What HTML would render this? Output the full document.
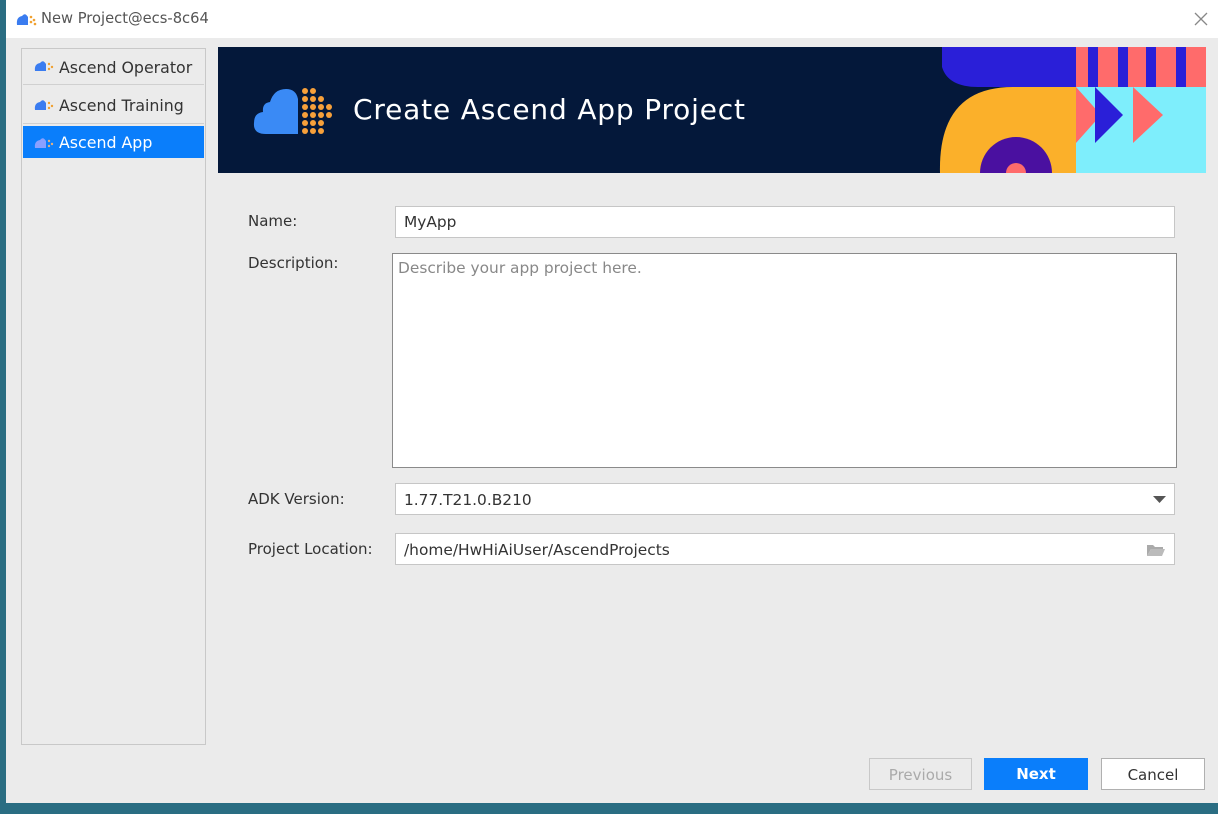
<!DOCTYPE html>
<html><head><meta charset="utf-8"><style>
*{margin:0;padding:0;box-sizing:border-box}
body{width:1218px;height:814px;background:#2a6d82;font-family:"DejaVu Sans","Liberation Sans",sans-serif;position:relative;overflow:hidden}
.win{position:absolute;left:6px;top:0;width:1212px;height:803px;background:#ebebeb}
.title{position:absolute;left:0;top:0;width:1212px;height:38px;background:#fff;font-size:14.7px;color:#555}
.abs{position:absolute}
.side{position:absolute;left:15px;top:48px;width:185px;height:697px;border:1px solid #c8c8c8;background:#ebebeb}
.item{position:absolute;left:1px;width:181px;font-size:15.8px;color:#333;padding-left:36px;border-bottom:1px solid #d0d0d0;background:#ebebeb}
.lbl{position:absolute;left:242px;font-size:15px;color:#333}
.fld{position:absolute;background:#fff;border:1px solid #c6c6c6;font-size:15.4px;color:#333;padding-left:8px}
.btn{position:absolute;top:758px;height:32px;font-size:15px;text-align:center;line-height:32px}
</style></head><body>
<div class="win">
<div class="title">
<svg class="abs" style="left:10px;top:11px" width="22" height="16"><path d="M1 14 Q0 6 6 5 Q9 1 12 6 L12 14Z" fill="#3a7cf0"/><circle cx="15" cy="6" r="1.3" fill="#f0a030"/><circle cx="18" cy="9" r="1.3" fill="#f0a030"/><circle cx="15" cy="11" r="1.3" fill="#f0a030"/><circle cx="19" cy="13" r="1.3" fill="#f0a030"/></svg>
<div class="abs" style="left:35px;top:10px">New Project@ecs-8c64</div>
<svg class="abs" style="left:1188px;top:12px" width="14" height="14"><path d="M1 1L13 13M13 1L1 13" stroke="#888" stroke-width="1.3"/></svg>
</div>
<div class="side">
<div class="item" style="top:1px;height:35px;line-height:35px">Ascend Operator</div>
<div class="item" style="top:38px;height:37px;line-height:37px">Ascend Training</div>
<div class="item" style="top:77px;height:32px;line-height:33px;background:#0a7efb;color:#fff;border:none">Ascend App</div>
<svg class="abs" style="left:12px;top:10px" width="22" height="14"><path d="M1 12 Q0 5 6 4 Q9 0 12 5 L12 12Z" fill="#3a7cf0"/><circle cx="15" cy="5" r="1.2" fill="#f0a030"/><circle cx="18" cy="8" r="1.2" fill="#f0a030"/><circle cx="15" cy="10" r="1.2" fill="#f0a030"/></svg>
<svg class="abs" style="left:12px;top:49px" width="22" height="14"><path d="M1 12 Q0 5 6 4 Q9 0 12 5 L12 12Z" fill="#3a7cf0"/><circle cx="15" cy="5" r="1.2" fill="#f0a030"/><circle cx="18" cy="8" r="1.2" fill="#f0a030"/><circle cx="15" cy="10" r="1.2" fill="#f0a030"/></svg>
<svg class="abs" style="left:12px;top:87px" width="22" height="14"><path d="M1 12 Q0 5 6 4 Q9 0 12 5 L12 12Z" fill="#8aa0ff"/><circle cx="15" cy="5" r="1.2" fill="#e0b080"/><circle cx="18" cy="8" r="1.2" fill="#e0b080"/><circle cx="15" cy="10" r="1.2" fill="#e0b080"/></svg>
</div>
<svg class="abs" style="left:212px;top:47px" width="988" height="126" viewBox="0 0 988 126">
<rect width="988" height="126" fill="#04183a"/>
<path d="M724 0 H858 V40 H760 Q730 40 724 20Z" fill="#2a1fd8"/>
<rect x="858" y="0" width="130" height="40" fill="#ff6b6b"/>
<rect x="870" y="0" width="10" height="40" fill="#2a1fd8"/><rect x="900" y="0" width="10" height="40" fill="#2a1fd8"/><rect x="928" y="0" width="10" height="40" fill="#2a1fd8"/><rect x="958" y="0" width="10" height="40" fill="#2a1fd8"/>
<rect x="858" y="40" width="130" height="86" fill="#7eeefc"/>
<path d="M858 40 L883 68 L858 96Z" fill="#ff6b6b"/><path d="M877 40 L905 68 L877 96Z" fill="#2a1fd8"/><path d="M915 40 L945 68 L915 96Z" fill="#ff6b6b"/>
<path d="M722 126 Q720 40 795 40 H858 V126Z" fill="#fbb02a"/>
<path d="M762 126 A36 36 0 0 1 834 126Z" fill="#4a10a0"/><path d="M788 126 A10 10 0 0 1 808 126Z" fill="#ff6b6b"/>
<path d="M48 87 Q35 87 36 76 Q36 66 45 65 Q44 56 52 55 Q56 42 68 42 Q78 42 80 52 V87Z" fill="#3a8af5"/>
<g fill="#f7a03a"><circle cx="87" cy="44" r="3"/><circle cx="95" cy="44" r="3"/><circle cx="87" cy="52" r="3"/><circle cx="95" cy="52" r="3"/><circle cx="103" cy="52" r="3"/><circle cx="87" cy="60" r="3"/><circle cx="95" cy="60" r="3"/><circle cx="103" cy="60" r="3"/><circle cx="111" cy="60" r="3"/><circle cx="87" cy="68" r="3"/><circle cx="95" cy="68" r="3"/><circle cx="103" cy="68" r="3"/><circle cx="111" cy="68" r="3"/><circle cx="87" cy="76" r="3"/><circle cx="95" cy="76" r="3"/><circle cx="103" cy="76" r="3"/><circle cx="87" cy="84" r="3"/><circle cx="95" cy="84" r="3"/><circle cx="103" cy="84" r="3"/></g>
<text x="135" y="72" font-family="DejaVu Sans, sans-serif" font-size="28" fill="#fff" textLength="392">Create Ascend App Project</text>
</svg>
<div class="lbl" style="top:212px">Name:</div>
<div class="fld" style="left:389px;top:206px;width:780px;height:32px;line-height:31px">MyApp</div>
<div class="lbl" style="top:254px">Description:</div>
<div class="fld" style="left:386px;top:253px;width:785px;height:215px;border-color:#8a8a8a;color:#888;padding-top:5px;padding-left:5px">Describe your app project here.</div>
<div class="lbl" style="top:490px">ADK Version:</div>
<div class="fld" style="left:389px;top:483px;width:780px;height:32px;line-height:32px">1.77.T21.0.B210
<svg class="abs" style="left:757px;top:12px" width="13" height="8"><path d="M0 0H13L6.5 7Z" fill="#555"/></svg></div>
<div class="lbl" style="top:540px">Project Location:</div>
<div class="fld" style="left:389px;top:533px;width:780px;height:32px;line-height:32px">/home/HwHiAiUser/AscendProjects
<svg class="abs" style="left:750px;top:9px" width="20" height="14"><path d="M1 2H7L9 4H17V6H5L1 13Z" fill="#aaa"/><path d="M5 6H19L16 13H1Z" fill="#bbb"/></svg></div>
<div class="btn" style="left:863px;width:103px;border:1px solid #c8c8c8;color:#aaa">Previous</div>
<div class="btn" style="left:978px;width:104px;background:#0a7efb;color:#fff;font-weight:bold">Next</div>
<div class="btn" style="left:1095px;width:104px;background:#fff;border:1px solid #b0b0b0;color:#333">Cancel</div>
</div>
</body></html>
